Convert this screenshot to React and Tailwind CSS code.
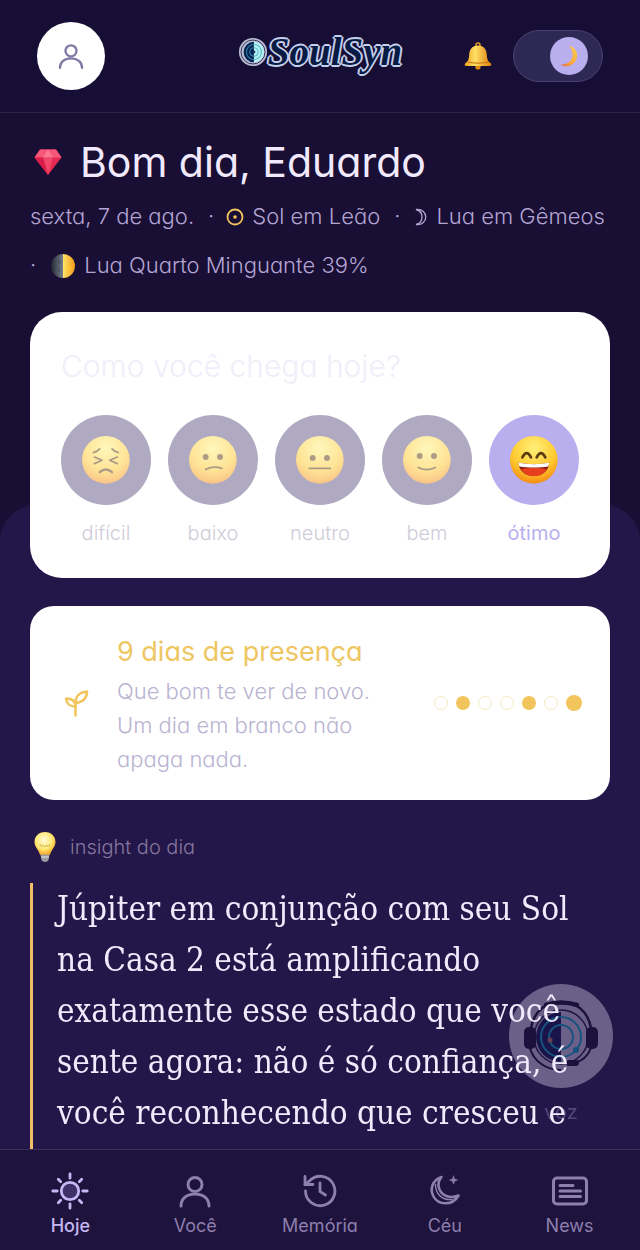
import React, { useState } from 'react';

const MOODS = [
  { id: 'dificil', label: 'difícil' },
  { id: 'baixo', label: 'baixo' },
  { id: 'neutro', label: 'neutro' },
  { id: 'bem', label: 'bem' },
  { id: 'otimo', label: 'ótimo' },
];

const WEEK = [false, true, false, false, true, false, true];

const PersonIcon = ({ className }) => (
  <svg viewBox="0 0 38 38" className={className} fill="none" stroke="currentColor" strokeWidth="3" strokeLinecap="round" aria-hidden="true">
    <circle cx="19" cy="12.500" r="7" />
    <path d="M5 34c0-7.500 6-12 14-12s14 4.500 14 12" />
  </svg>
);

const SunIcon = () => (
  <svg viewBox="0 0 38 38" className="size-[38px]" fill="none" stroke="currentColor" strokeWidth="2.800" strokeLinecap="round" aria-hidden="true">
    <circle cx="19" cy="19" r="8.700" fill="#3f3068" />
    <path d="M19 1.800v4.400M19 31.800v4.400M1.800 19h4.400M31.800 19h4.400M7.300 7.300l2.400 2.400M28.300 28.300l2.400 2.400M7.300 30.700l2.400-2.400M28.300 9.700l2.400-2.400" />
  </svg>
);

const HistoryIcon = () => (
  <svg viewBox="0 0 38 38" className="size-[38px]" fill="none" stroke="currentColor" strokeWidth="2.800" strokeLinecap="round" strokeLinejoin="round" aria-hidden="true">
    <path d="M4.500 19a14.700 14.700 0 1 0 4.300-10.400L4 12.500" />
    <path d="M4 4.500v8h8" />
    <path d="M19 11v8.500l5.500 3.500" />
  </svg>
);

const MoonIcon = () => (
  <svg viewBox="0 0 38 38" className="size-[38px]" fill="none" stroke="currentColor" strokeWidth="2.600" strokeLinejoin="round" strokeLinecap="round" aria-hidden="true">
    <path d="M15.500 5C6.500 8 3.500 17 7.500 24.500c5 9 19 9.500 25-1C24 27 16.500 24 13.500 17.500c-2-4.500-1-9 2-12.500z" />
    <path d="M9.500 12.500c0 10 7 16 16.500 15" strokeWidth="1.500" />
    <path d="M27.500 4l1.100 3 3 1.100-3 1.100-1.100 3-1.100-3-3-1.100 3-1.100z" fill="currentColor" strokeWidth="0.500" />
  </svg>
);

const NewsIcon = () => (
  <svg viewBox="0 0 38 38" className="size-[38px]" fill="none" stroke="currentColor" strokeWidth="3" strokeLinecap="round" aria-hidden="true">
    <rect x="2.500" y="6" width="33" height="26" rx="3.500" />
    <path d="M9 13.500h13M9 19h20.500M9 24.500h20.500" />
  </svg>
);

const TABS = [
  { label: 'Hoje', icon: <SunIcon /> },
  { label: 'Você', icon: <PersonIcon className="size-[38px]" /> },
  { label: 'Memória', icon: <HistoryIcon /> },
  { label: 'Céu', icon: <MoonIcon /> },
  { label: 'News', icon: <NewsIcon /> },
];

const LogoMark = () => (
  <svg viewBox="0 0 32 32" className="size-[30px] shrink-0" aria-hidden="true">
    <circle cx="16" cy="16" r="15" fill="#b9bdd4" />
    <circle cx="16" cy="16" r="12.800" fill="none" stroke="#34315a" strokeWidth="1" />
    <path d="M17 5a11 11 0 0 0 0 22z" fill="#06214f" />
    <path d="M17 5a11 11 0 0 1 0 22z" fill="#b6f1f1" />
    <path d="M17 8a8 8 0 0 0 0 16M17 11.500a4.500 4.500 0 0 0 0 9" fill="none" stroke="#2b7fa5" strokeWidth="1.200" />
    <path d="M17 8a8 8 0 0 1 0 16M17 11.500a4.500 4.500 0 0 1 0 9" fill="none" stroke="#5cbccb" strokeWidth="1.200" />
    <circle cx="17" cy="16" r="1.500" fill="#12305e" />
  </svg>
);

const BellIcon = () => (
  <svg viewBox="0 0 30 30" className="size-[30px]" aria-hidden="true">
    <defs>
      <linearGradient id="bell" x1="0" x2="1">
        <stop offset="0" stopColor="#f0a01b" />
        <stop offset=".4" stopColor="#ffe066" />
        <stop offset="1" stopColor="#dd7a08" />
      </linearGradient>
    </defs>
    <circle cx="15" cy="4" r="2" fill="none" stroke="#e39a26" strokeWidth="1.500" />
    <circle cx="15" cy="26" r="2.600" fill="#e48a10" />
    <path d="M15 4.500c-6 0-8.500 4-8.800 9-.3 5-1.200 7-3.700 8.500C1 23.500 1.500 25 3.500 25h23c2 0 2.500-1.500 1-3-2.500-1.500-3.400-3.500-3.700-8.500-.3-5-2.800-9-8.800-9z" fill="url(#bell)" />
    <path d="M5 21c5 1.500 15 1.500 20 0" fill="none" stroke="#c66c0c" strokeWidth="1" />
  </svg>
);

const CrescentIcon = () => (
  <svg viewBox="0 0 24 24" className="size-6" aria-hidden="true">
    <defs>
      <linearGradient id="crescent" x1="1" y1="0" x2="0" y2="1">
        <stop offset="0" stopColor="#ffd04a" />
        <stop offset=".6" stopColor="#f9a840" />
        <stop offset="1" stopColor="#ee6540" />
      </linearGradient>
    </defs>
    <path d="M12 1.500c6.500 2 9.500 7.500 7.500 13.500C17.500 21.500 9 24.500 3.500 20.500c6 0 11-2.500 12-8C16 8 14.500 4.500 12 1.500z" fill="url(#crescent)" />
  </svg>
);

const GemIcon = () => (
  <svg viewBox="0 0 28 28" className="size-7 shrink-0" aria-hidden="true">
    <path d="M6 1.500h16l5.500 8L14 27 .5 9.500z" fill="#e52a53" />
    <path d="M6 1.500h16l5.500 8H.5z" fill="#f5577a" />
    <path d="M9 9.500l5-8 5 8z" fill="#fb7891" />
    <path d="M9 9.500h10L14 27z" fill="#f0476b" />
    <path d="M.5 9.500L9 9.500 14 27z" fill="#d91d49" />
  </svg>
);

const HalfMoonIcon = () => (
  <svg viewBox="0 0 26 26" className="size-[26px]" aria-hidden="true">
    <defs>
      <linearGradient id="halfLight" x1="0" x2="1">
        <stop offset="0" stopColor="#ffe566" />
        <stop offset="1" stopColor="#f39a1c" />
      </linearGradient>
      <linearGradient id="halfDark" x1="0" x2="1">
        <stop offset="0" stopColor="#20252f" />
        <stop offset="1" stopColor="#77808d" />
      </linearGradient>
    </defs>
    <path d="M13 1a12 12 0 0 0 0 24z" fill="url(#halfDark)" />
    <path d="M13 1a12 12 0 0 1 0 24z" fill="url(#halfLight)" />
    <circle cx="9" cy="9" r="1.800" fill="#4d5663" />
    <circle cx="8" cy="17" r="2.200" fill="#4d5663" />
    <circle cx="19" cy="15" r="2" fill="#ffc62e" />
  </svg>
);

const BulbIcon = () => (
  <svg viewBox="0 0 30 32" className="h-8 w-[30px]" aria-hidden="true">
    <defs>
      <radialGradient id="bulb" cx=".45" cy=".35" r=".65">
        <stop offset="0" stopColor="#fffbd8" />
        <stop offset=".6" stopColor="#ffe873" />
        <stop offset="1" stopColor="#f5a623" />
      </radialGradient>
    </defs>
    <path d="M15 1C8.500 1 4.500 5.500 4.500 11c0 5 4.500 8 5.500 13h10c1-5 5.500-8 5.500-13C25.500 5.500 21.500 1 15 1z" fill="url(#bulb)" />
    <path d="M10 13c1 3.500 2.500 2.500 3 1 .5 2 3 2 3.500 0 .5 2 3 2 3.500-1" fill="none" stroke="#c9b04a" strokeWidth="1" />
    <path d="M10.500 23.500h9l-1 5.500c-1 2.600-6 2.600-7 0z" fill="#9b9aa3" />
    <path d="M11 26h8" stroke="#d8d8de" strokeWidth="1.200" />
  </svg>
);

const SproutIcon = () => (
  <svg viewBox="0 0 26 30" className="h-[30px] w-[26px] shrink-0" fill="none" stroke="#f2c55c" strokeWidth="2.500" strokeLinecap="round" strokeLinejoin="round" aria-hidden="true">
    <path d="M12.500 27.500V15" />
    <path d="M12.500 15C12.500 8 17 4 24 3.500c0 6.500-4 10.500-11.500 11.500z" />
    <path d="M12.500 18.500C12.500 13 9 10.500 3 10.500c.5 5 4 8 9.500 8z" />
  </svg>
);

const FACES = {
  dificil: (
    <>
      <path d="M12 17.500q4-1 6.500-4M38 17.500q-4-1-6.500-4" />
      <path d="M13 22l8 3.500-8 3.500M37 22l-8 3.500 8 3.500" />
      <path d="M18.500 38q6.500-6 13 0" strokeWidth="2.500" />
    </>
  ),
  baixo: (
    <>
      <circle cx="17.500" cy="22" r="2.200" fill="#5c3a12" />
      <circle cx="32.500" cy="22" r="2.200" fill="#5c3a12" />
      <path d="M17.500 35q8-4 17-1" />
    </>
  ),
  neutro: (
    <>
      <circle cx="17.500" cy="23" r="2.200" fill="#5c3a12" />
      <circle cx="32.500" cy="23" r="2.200" fill="#5c3a12" />
      <path d="M14 34h22" />
    </>
  ),
  bem: (
    <>
      <circle cx="17.500" cy="21" r="2.200" fill="#5c3a12" />
      <circle cx="32.500" cy="21" r="2.200" fill="#5c3a12" />
      <path d="M16 33q9 4.500 18 0" />
    </>
  ),
  otimo: (
    <>
      <path d="M13 22.500q4.500-9 9 0M28 22.500q4.500-9 9 0" strokeWidth="2.800" />
      <path d="M9 28q16 3 32 0c0 8-7 14-16 14S9 36 9 28z" fill="#8c1b12" stroke="none" />
      <path d="M12 35c3-2 23-2 26 0-3 5-7.500 7-13 7s-10-2-13-7z" fill="#e8401f" stroke="none" />
      <path d="M9 28q16 3 32 0c0 1.500-.5 3-1 4-9 1.500-21 1.500-30 0C9.500 31 9 29.500 9 28z" fill="#fff" stroke="none" />
    </>
  ),
};

const Face = ({ mood }) => (
  <svg viewBox="0 0 50 50" className="w-[53%]" fill="none" stroke="#5c3a12" strokeWidth="1.800" strokeLinecap="round" strokeLinejoin="round" aria-hidden="true">
    <defs>
      <radialGradient id={`face-${mood}`} cx=".5" cy=".25" r=".8">
        <stop offset="0" stopColor="#fff07a" />
        <stop offset=".6" stopColor="#ffc92e" />
        <stop offset="1" stopColor="#f3800f" />
      </radialGradient>
    </defs>
    <circle cx="25" cy="25" r="25" fill={`url(#face-${mood})`} stroke="none" />
    {FACES[mood]}
  </svg>
);

const HeadsetIcon = () => (
  <svg viewBox="0 0 104 104" className="size-[104px]" fill="none" aria-hidden="true">
    <circle cx="52" cy="52" r="52" fill="#f3ecff" />
    <path d="M52 28a25 25 0 0 0 0 50z" fill="#0a1450" />
    <circle cx="52" cy="53" r="27" stroke="#1b1238" strokeWidth="1.500" />
    <path d="M22 44C25 27 37 18 52 18s27 9 30 26" stroke="#120b28" strokeWidth="2.500" />
    <path d="M37 21q15-5 31 0" stroke="#120b28" strokeWidth="4.500" strokeLinecap="round" />
    <rect x="15" y="43" width="12" height="22" rx="5" fill="#120b28" />
    <rect x="77" y="43" width="12" height="22" rx="5" fill="#120b28" />
    <path d="M21 64c3 12 15 22 31 22M82 64c-3 8-8 13-17 15" stroke="#120b28" strokeWidth="2" />
    <rect x="57" y="76" width="13" height="6" rx="3" fill="#120b28" />
    <circle cx="52" cy="53" r="20" stroke="#00c4e8" strokeWidth="2" />
    <circle cx="52" cy="53" r="12" stroke="#00c4e8" strokeWidth="2" />
    <circle cx="67" cy="66" r="3" fill="#00c4e8" />
    <circle cx="41" cy="56" r="2.500" fill="#f08a66" />
  </svg>
);

const Header = () => {
  const [dark, setDark] = useState(true);

  return (
    <header className="grid grid-cols-[1fr_auto_1fr] items-center border-b border-[#2d2449] bg-[#160e35] px-[37px] pt-[22px] pb-[22px]">
      <button aria-label="Perfil" className="flex size-[68px] items-center justify-center rounded-full bg-white text-[#8378a6]">
        <PersonIcon className="size-[30px]" />
      </button>
      <div className="-mt-2 flex items-center">
        <LogoMark />
        <span className="font-['Liberation_Serif',serif] text-[39px] leading-[48px] font-bold text-[#071b45] italic [text-shadow:2px_0_0_#c5cfec,-2px_0_0_#c5cfec,0_2px_0_#c5cfec,0_-2px_0_#c5cfec,1px_1px_0_#c5cfec,-1px_1px_0_#c5cfec,1px_-1px_0_#c5cfec,-1px_-1px_0_#c5cfec]">
          SoulSyn
        </span>
      </div>
      <div className="flex items-center justify-end gap-5">
        <button aria-label="Notificações">
          <BellIcon />
        </button>
        <button
          role="switch"
          aria-checked={dark}
          aria-label="Tema escuro"
          onClick={() => setDark(!dark)}
          className={`flex h-[52px] w-[90px] items-center rounded-full border border-[#4a4070] bg-[#2d2854] px-3.5 ${dark ? 'justify-end' : 'justify-start'}`}
        >
          <span className="flex size-[38px] items-center justify-center rounded-full bg-[#b9aeee]">
            <CrescentIcon />
          </span>
        </button>
      </div>
    </header>
  );
};

const Greeting = () => (
  <div>
    <div className="flex items-center gap-[18px] pl-1">
      <GemIcon />
      <h1 className="text-[41px] leading-[52px] font-normal text-[#f1eafd]">Bom dia, Eduardo</h1>
    </div>
    <div className="mt-1 flex flex-wrap gap-x-[14px] text-[22px] leading-[49px] font-light whitespace-nowrap text-[#b3a5d3]">
      <span>sexta, 7 de ago.</span>
      <span className="flex items-center">
        <span className="mr-3">·</span>
        <svg viewBox="0 0 18 18" className="mr-2 size-[18px]" aria-hidden="true">
          <circle cx="9" cy="9" r="7.500" fill="none" stroke="#f2c55c" strokeWidth="1.800" />
          <circle cx="9" cy="9" r="1.800" fill="#f2c55c" />
        </svg>
        Sol em Leão
      </span>
      <span className="flex items-center">
        <span className="mr-3.5">·</span>
        <svg viewBox="0 0 14 18" className="mr-2 h-[18px] w-3.5" fill="none" stroke="currentColor" strokeWidth="1.300" aria-hidden="true">
          <path d="M2 1.500c13-1.500 13 16.500 0 15C10 14.500 10 3.500 2 1.500z" />
        </svg>
        Lua em Gêmeos
      </span>
      <span className="flex items-center">
        <span className="mr-3.5">·</span>
        <span className="mr-2">
          <HalfMoonIcon />
        </span>
        Lua Quarto Minguante 39%
      </span>
    </div>
  </div>
);

const MoodCard = () => {
  const [selected, setSelected] = useState('otimo');

  return (
    <section className="relative z-10 mt-[22px] rounded-[32px] bg-white px-[31px] pt-9 pb-[29px]">
      <h2 className="text-[30px] leading-9 font-light text-[#f1edf9]">Como você chega hoje?</h2>
      <div className="mt-[31px] grid grid-cols-5 gap-[17px]">
        {MOODS.map((mood) => {
          const active = mood.id === selected;
          return (
            <button
              key={mood.id}
              aria-pressed={active}
              onClick={() => setSelected(mood.id)}
              className="flex flex-col items-center gap-3"
            >
              <span className={`flex aspect-square w-full items-center justify-center rounded-full ${active ? 'bg-[#b9aeee]' : 'bg-[#615785] opacity-50'}`}>
                <Face mood={mood.id} />
              </span>
              <span className={`text-[20px] leading-8 ${active ? 'text-[#b9aeee]' : 'font-light text-[#cfccd8]'}`}>{mood.label}</span>
            </button>
          );
        })}
      </div>
    </section>
  );
};

const PresenceCard = () => (
  <section className="flex items-center gap-7 rounded-3xl bg-white py-6 pr-7 pl-[33px]">
    <SproutIcon />
    <div className="min-w-0 flex-1">
      <h2 className="text-[27px] leading-[44px] font-normal text-[#eec662]">9 dias de presença</h2>
      <p className="max-w-[280px] text-[22px] leading-[34px] font-light text-[#b9b3d2]">
        Que bom te ver de novo. Um dia em branco não apaga nada.
      </p>
    </div>
    <div className="flex shrink-0 items-center gap-2">
      {WEEK.map((done, idx) => (
        <span
          key={idx}
          className={`rounded-full ${idx === WEEK.length - 1 ? 'size-4' : 'size-[14px]'} ${done ? 'bg-[#f2c55c]' : 'border border-[#f3e8be]'}`}
        ></span>
      ))}
    </div>
  </section>
);

const Insight = () => (
  <section className="flex flex-1 flex-col">
    <div className="mt-[31px] flex items-center gap-2.5">
      <BulbIcon />
      <h2 className="text-[20px] leading-8 font-light text-[#85779f]">insight do dia</h2>
    </div>
    <blockquote className="relative z-20 mt-5 flex-1 border-l-[3px] border-[#eebf68] pl-6 font-['DejaVu_Serif_Condensed','DejaVu_Serif',serif] text-[33px] leading-[51px] text-[#f1eafd]">
      Júpiter em conjunção com seu Sol na Casa 2 está amplificando exatamente esse estado que você sente agora: não é só confiança, é você reconhecendo que cresceu e
    </blockquote>
  </section>
);

const TabBar = () => (
  <nav className="grid grid-cols-5 border-t border-[#3a2d5c] bg-[#1e133c] px-2 pt-[22px] pb-3">
    {TABS.map((tab, idx) => (
      <a
        key={tab.label}
        href="#"
        aria-current={idx === 0 ? 'page' : undefined}
        className={`flex flex-col items-center gap-1 text-[18px] leading-6 ${idx === 0 ? 'font-medium text-[#c5b7f3]' : 'text-[#8d7fae]'}`}
      >
        {tab.icon}
        {tab.label}
      </a>
    ))}
  </nav>
);

const App = () => {
  return (
    <div className="flex h-screen flex-col overflow-hidden bg-[#190e33] font-['Inter','Open_Sans',sans-serif] [font-feature-settings:'cv11']">
      <Header />
      <main className="flex min-h-0 flex-1 flex-col overflow-hidden">
        <div className="px-[30px] pt-[23px]">
          <Greeting />
          <MoodCard />
        </div>
        <div className="-mt-[73px] flex flex-1 flex-col rounded-t-[36px] bg-[#231648] px-[30px] pt-[101px]">
          <PresenceCard />
          <Insight />
        </div>
      </main>
      <TabBar />

      {/* Floating voice assistant, sits under the insight text */}
      <button className="fixed right-[27px] bottom-[126px] z-10 flex flex-col items-center gap-3 text-[20px] leading-6 text-[#b3a5d3] opacity-35">
        <HeadsetIcon />
        voz
      </button>
    </div>
  );
};

export default App;
